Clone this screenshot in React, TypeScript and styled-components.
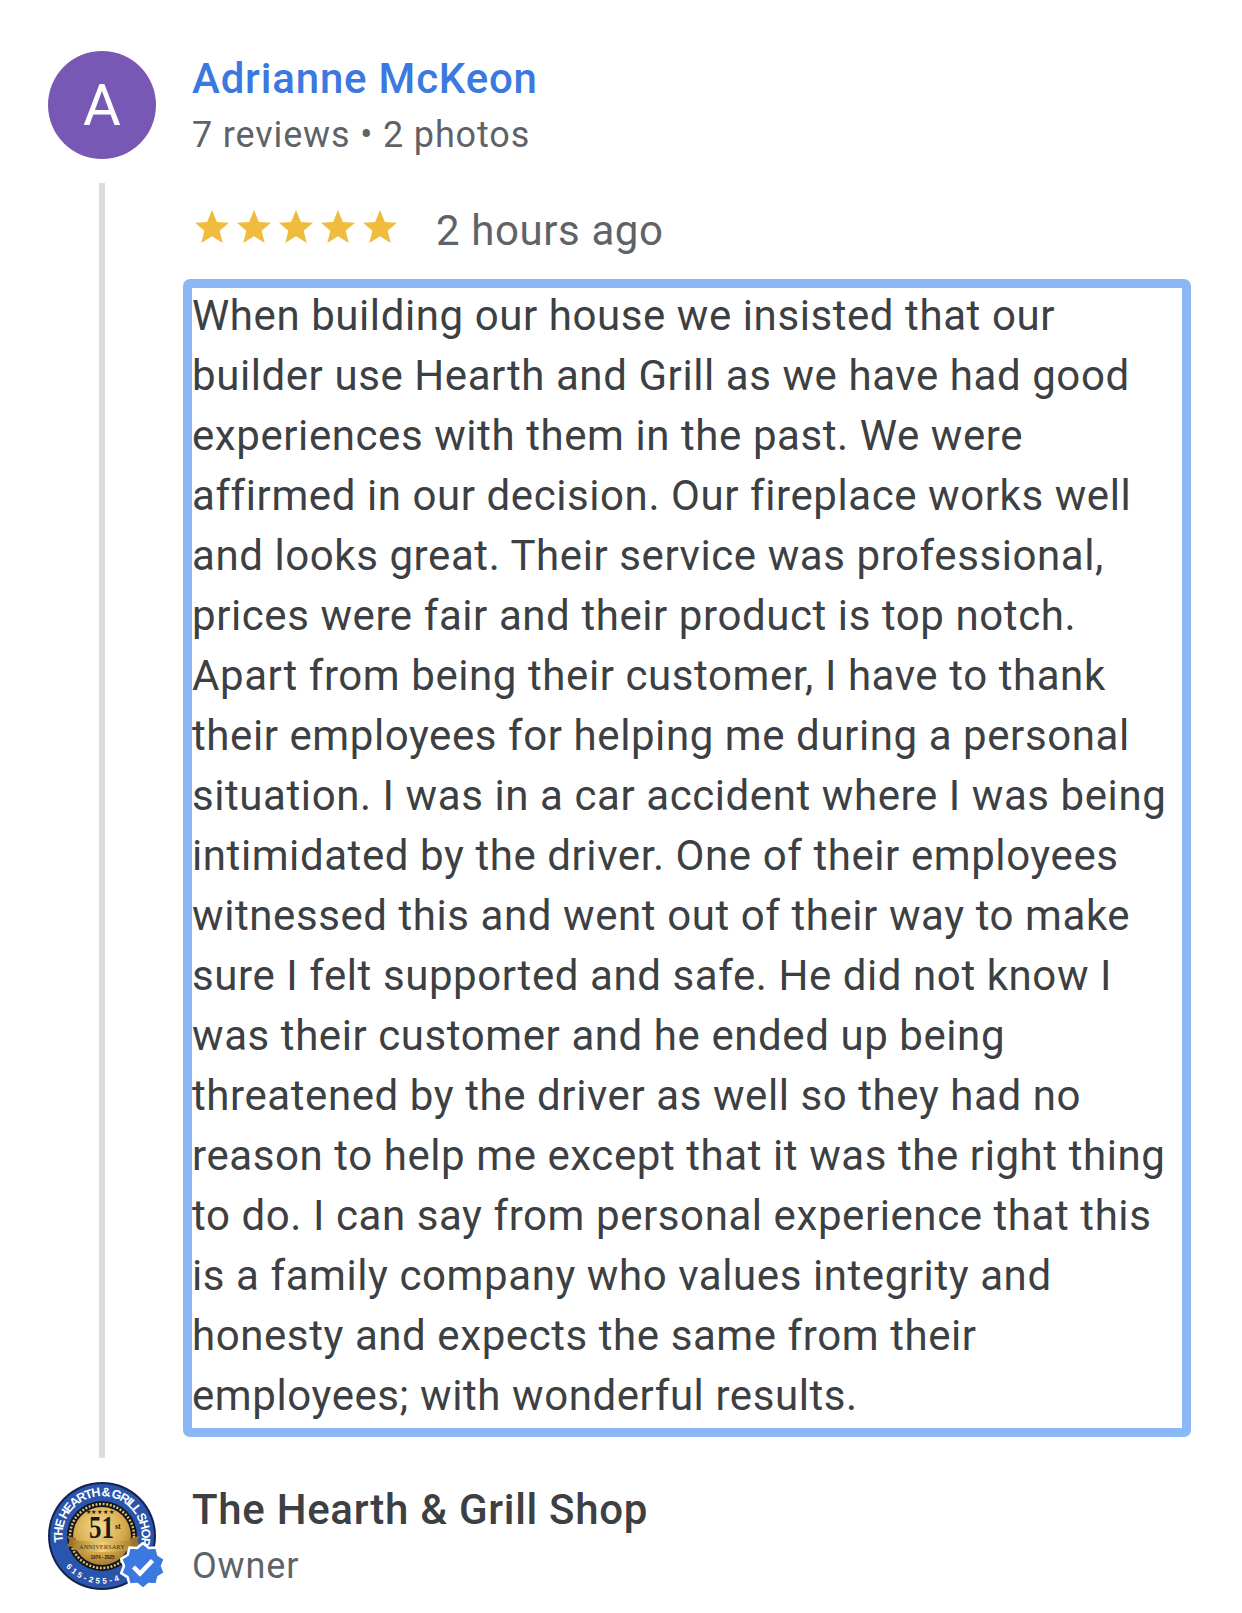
import React from "react";
import styled, { createGlobalStyle } from "styled-components";

const Global = createGlobalStyle`
  html, body { margin: 0; padding: 0; background: #fff; }
  body { font-family: Roboto, "Liberation Sans", sans-serif; }
`;

const Page = styled.div`
  width: 1242px;
  height: 1613px;
  box-sizing: border-box;
  padding: 51px 0 0 48px;
  display: flex;
  flex-direction: column;
  overflow: hidden;
`;
const PersonRow = styled.div`
  display: flex;
  align-items: flex-start;
  gap: 36px;
  height: 108px;
`;
const Avatar = styled.div`
  width: 108px;
  height: 108px;
  flex: none;
  border-radius: 50%;
  background: #7858b5;
  color: #fff;
  font-size: 58px;
  display: flex;
  align-items: center;
  justify-content: center;
`;
const Meta = styled.div`
  display: flex;
  flex-direction: column;
  padding-top: 3px;
`;
const Name = styled.div<{ $owner?: boolean }>`
  font-size: 42px;
  line-height: 50px;
  font-weight: 500;
  letter-spacing: ${(p) => (p.$owner ? "0.7px" : "0.8px")};
  color: ${(p) => (p.$owner ? "#3c4043" : "#3b78e0")};
`;
const Sub = styled.div`
  margin-top: 8px;
  font-size: 36px;
  line-height: 46px;
  letter-spacing: 0.85px;
  color: #5f6368;
`;
const BodyRow = styled.div`
  margin-top: 24px;
  height: 1275px;
  display: flex;
`;
const RailCol = styled.div`
  width: 108px;
  flex: none;
  display: flex;
  justify-content: center;
`;
const Rail = styled.div`
  width: 6px;
  background: #dadce0;
`;
const Content = styled.div`
  margin-left: 27px;
  width: 1008px;
  display: flex;
  flex-direction: column;
`;
const RatingRow = styled.div`
  height: 96px;
  display: flex;
  align-items: flex-start;
  padding: 27px 0 0 12px;
  box-sizing: border-box;
`;
const Stars = styled.div`
  display: flex;
  gap: 8px;
`;
const When = styled.div`
  margin-left: 39px;
  font-size: 42px;
  line-height: 42px;
  letter-spacing: 0.6px;
  color: #5f6368;
`;
const Quote = styled.div`
  box-sizing: border-box;
  width: 1008px;
  height: 1158px;
  border: 9px solid #8ab8f7;
  border-radius: 7px;
`;
const QuoteText = styled.p`
  margin: -2px 0 0;
  font-size: 42px;
  line-height: 60px;
  letter-spacing: 0.58px;
  color: #3c4043;
`;
const OwnerRow = styled(PersonRow)`
  margin-top: 24px;
`;
const LogoWrap = styled.div`
  position: relative;
  width: 108px;
  height: 108px;
  flex: none;
`;
const Verified = styled.svg`
  position: absolute;
  left: 70px;
  top: 59px;
`;

const Star = () => (
  <svg width="34" height="33" viewBox="0 0 34 33">
    <path d="M17 0l4.900 11.900 12.100.8-9.300 8 3 12.300L17 26.300 6.300 33l3-12.300-9.300-8 12.100-.8z" fill="#f0bc3d" />
  </svg>
);

const burst = (() => {
  const n = 10;
  const pts: string[] = [];
  for (let i = 0; i < n * 2; i++) {
    const r = i % 2 === 0 ? 23 : 19;
    const a = (Math.PI * i) / n - Math.PI / 2;
    pts.push(`${(25 + r * Math.cos(a)).toFixed(2)},${(25 + r * Math.sin(a)).toFixed(2)}`);
  }
  return pts.join(" ");
})();

const Logo = () => (
  <svg width="108" height="108" viewBox="0 0 108 108">
    <defs>
      <radialGradient id="gold" cx="45%" cy="35%" r="75%">
        <stop offset="0" stopColor="#f6dc8e" />
        <stop offset="0.6" stopColor="#d5a84a" />
        <stop offset="1" stopColor="#8f6a22" />
      </radialGradient>
      <linearGradient id="ribbon" x1="0" x2="1" y1="0" y2="0">
        <stop offset="0" stopColor="#a97f2c" />
        <stop offset="0.5" stopColor="#f0d27c" />
        <stop offset="1" stopColor="#a97f2c" />
      </linearGradient>
      <path id="topArc" d="M15 60 A39.500 39.500 0 1 1 93 60" />
      <path id="botArc" d="M8 66 A47.500 47.500 0 0 0 100 66" />
    </defs>
    <circle cx="54" cy="54" r="54" fill="#14224f" />
    <circle cx="54" cy="54" r="52" fill="#2a55ad" />
    <text fontFamily="'Liberation Sans', sans-serif" fontWeight="700" fontSize="12.500" fill="#fff" letterSpacing="-1.500">
      <textPath href="#topArc" startOffset="0">
        THE HEARTH &amp; GRILL SHOP
      </textPath>
    </text>
    <text fontFamily="'Liberation Sans', sans-serif" fontWeight="700" fontSize="8" fill="#fff" letterSpacing="0.3">
      <textPath href="#botArc" startOffset="17%">6 1 5 - 2 5 5 - 4</textPath>
    </text>
    <circle cx="54" cy="54" r="35" fill="#10131f" />
    <circle cx="54" cy="54" r="32" fill="none" stroke="#e0bd63" strokeWidth="2.500" strokeDasharray="2 1.600" />
    <circle cx="54" cy="54" r="29" fill="url(#gold)" />
    <g fill="#1b1a16" fontFamily="'Liberation Serif', serif">
      <text x="41" y="56" fontSize="31" fontWeight="700" textLength="25" lengthAdjust="spacingAndGlyphs">51</text>
      <text x="67" y="47" fontSize="8" fontWeight="700">st</text>
      <text x="52" y="32" fontSize="5.500" textAnchor="middle" letterSpacing="0.800">★★★★★</text>
    </g>
    <path d="M19 54l9 2v10l-9-2 3-5z" fill="#9c7427" />
    <path d="M92 54l-9 2v10l9-2-3-5z" fill="#9c7427" />
    <path d="M25 58 Q54 62 84 58 L84 68 Q54 72 25 68z" fill="url(#ribbon)" />
    <text x="31" y="67" fontFamily="'Liberation Serif', serif" fontSize="7" fill="#4a3610" textLength="46" lengthAdjust="spacingAndGlyphs">
      ANNIVERSARY
    </text>
    <text x="54.500" y="77" fontFamily="'Liberation Sans', sans-serif" fontWeight="700" fontSize="4.500" fill="#2b2110" textAnchor="middle">
      1974 - 2025
    </text>
  </svg>
);

export default function App() {
  return (
    <Page>
      <Global />
      <PersonRow>
        <Avatar>A</Avatar>
        <Meta>
          <Name>Adrianne McKeon</Name>
          <Sub>7 reviews • 2 photos</Sub>
        </Meta>
      </PersonRow>
      <BodyRow>
        <RailCol>
          <Rail />
        </RailCol>
        <Content>
          <RatingRow>
            <Stars>
              <Star />
              <Star />
              <Star />
              <Star />
              <Star />
            </Stars>
            <When>2 hours ago</When>
          </RatingRow>
          <Quote>
            <QuoteText>
              When building our house we insisted that our builder use Hearth and Grill as we have had good experiences
              with them in the past. We were affirmed in our decision. Our fireplace works well and looks great. Their
              service was professional, prices were fair and their product is top notch. Apart from being their customer,
              I have to thank their employees for helping me during a personal situation. I was in a car accident where I
              was being intimidated by the driver. One of their employees witnessed this and went out of their way to make
              sure I felt supported and safe. He did not know I was their customer and he ended up being threatened by the
              driver as well so they had no reason to help me except that it was the right thing to do. I can say from
              personal experience that this is a family company who values integrity and honesty and expects the same from
              their employees; with wonderful results.
            </QuoteText>
          </Quote>
        </Content>
      </BodyRow>
      <OwnerRow>
        <LogoWrap>
          <Logo />
          <Verified width="50" height="50" viewBox="0 0 50 50">
            <polygon points={burst} fill="#3b78e0" stroke="#fff" strokeWidth="2.500" strokeLinejoin="round" />
            <path d="M15.500 26l6.500 6.500 12.500-13" fill="none" stroke="#fff" strokeWidth="4.500" />
          </Verified>
        </LogoWrap>
        <Meta>
          <Name $owner>The Hearth &amp; Grill Shop</Name>
          <Sub>Owner</Sub>
        </Meta>
      </OwnerRow>
    </Page>
  );
}
